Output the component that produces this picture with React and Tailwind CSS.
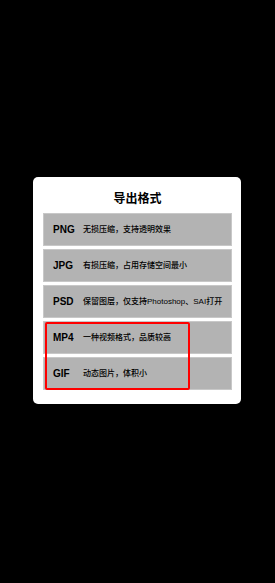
import React from "react";

const formats = [
  { name: "PNG", desc: "无损压缩，支持透明效果" },
  { name: "JPG", desc: "有损压缩，占用存储空间最小" },
  { name: "PSD", desc: "保留图层，仅支持Photoshop、SAI打开" },
  { name: "MP4", desc: "一种视频格式，品质较高" },
  { name: "GIF", desc: "动态图片，体积小" },
];

export default function App() {
  return (
    <div
      className="w-[275px] h-[583px] bg-black flex flex-col items-start pt-[177px] pl-[33px]"
      style={{ fontFamily: '"Liberation Sans", "Noto Sans CJK SC", sans-serif' }}
    >
      <div className="w-[208px] bg-white rounded-[5px] pt-[9px] pb-[14px] pl-[10px] pr-[9px]">
        <div className="h-[26px] flex items-center justify-center text-[12px] font-bold text-black leading-none">
          导出格式
        </div>
        <div className="relative mt-[1px] flex flex-col gap-[3px]">
          {formats.map((f) => (
            <div
              key={f.name}
              className="h-[33px] bg-[#b3b3b3] border border-[#c8c8c8] flex items-center pl-[9px]"
            >
              <span className="w-[30px] text-[10px] font-bold text-black leading-none">{f.name}</span>
              <span className="text-[8px] font-medium text-black leading-none whitespace-nowrap">{f.desc}</span>
            </div>
          ))}
          <div className="absolute left-[2px] top-[109px] w-[145px] h-[68px] border-2 border-[#ff0000] rounded-[2px]" />
        </div>
      </div>
    </div>
  );
}
